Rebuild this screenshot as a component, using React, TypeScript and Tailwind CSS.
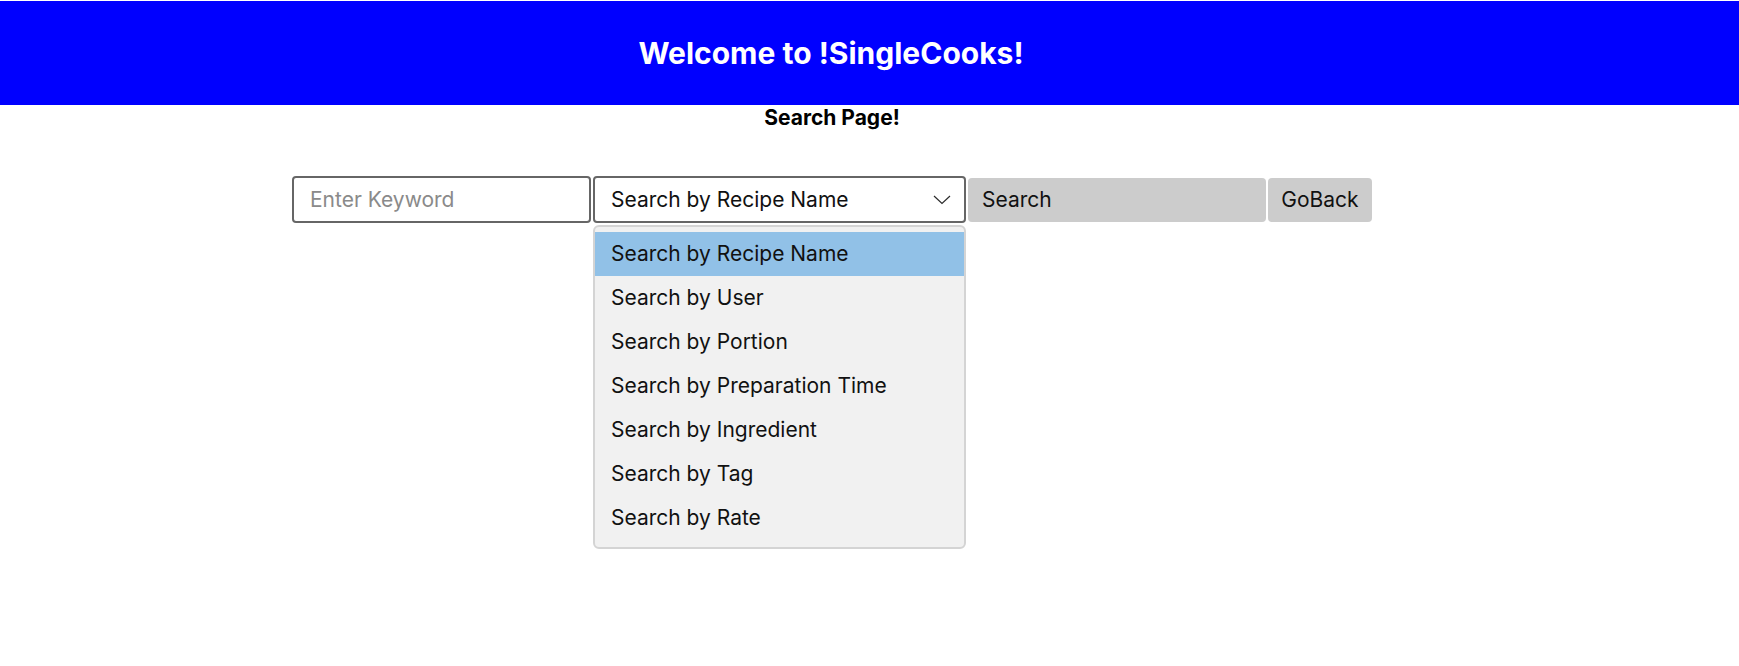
import { useState } from 'react';

const OPTIONS = [
  'Search by Recipe Name',
  'Search by User',
  'Search by Portion',
  'Search by Preparation Time',
  'Search by Ingredient',
  'Search by Tag',
  'Search by Rate',
];

const Chevron = () => (
  <svg width="18" height="10" viewBox="0 0 18 10" fill="none" aria-hidden="true">
    <polyline points="1,1 9,8.5 17,1" stroke="#2b2b2b" strokeWidth="1.2" />
  </svg>
);

export default function App() {
  const [selected] = useState(0);

  return (
    <div className="min-h-screen bg-white text-black" style={{ fontFamily: 'Inter, "Noto Sans", sans-serif' }}>
      <header className="mt-px h-[104px] bg-[#0000ff] flex items-center">
        <div className="w-[1662px] text-center">
          <h1 className="text-[30px] font-bold text-white leading-none">Welcome to !SingleCooks!</h1>
        </div>
      </header>

      <main className="w-[1664px]">
        <h2 className="text-center text-[21px] font-bold leading-[25px]">Search Page!</h2>

        <div className="mt-[46px] flex items-center justify-center">
          <input
            type="text"
            placeholder="Enter Keyword"
            className="h-[47px] w-[299px] rounded-[4px] border-2 border-[#666666] bg-white px-4 text-[21px] text-black placeholder:text-[#8a8a8a] outline-none"
          />

          {/* select with its open list */}
          <div className="relative ml-[2px]">
            <div className="h-[47px] w-[373px] rounded-[4px] border-2 border-[#666666] bg-white pl-4 pr-[13px] flex items-center justify-between text-[21px] text-[#111]">
              <span>{OPTIONS[selected]}</span>
              <Chevron />
            </div>
            <ul className="absolute left-0 top-[calc(100%+2px)] z-10 w-[373px] rounded-[6px] border-2 border-[#d4d4d4] bg-[#f1f1f1] pt-[5px] pb-[7px]">
              {OPTIONS.map((opt, i) => (
                <li
                  key={opt}
                  className={`h-[44px] flex items-center pl-4 text-[21px] text-[#111] ${i === selected ? 'bg-[#91c1e7]' : ''}`}
                >
                  {opt}
                </li>
              ))}
            </ul>
          </div>

          <button className="ml-[2px] h-[44px] w-[298px] rounded-[4px] bg-[#cccccc] px-[14px] text-left text-[21px] text-[#111]">
            Search
          </button>
          <button className="ml-[2px] h-[44px] w-[104px] rounded-[4px] bg-[#cccccc] text-center text-[21px] text-[#111]">
            GoBack
          </button>
        </div>
      </main>
    </div>
  );
}
